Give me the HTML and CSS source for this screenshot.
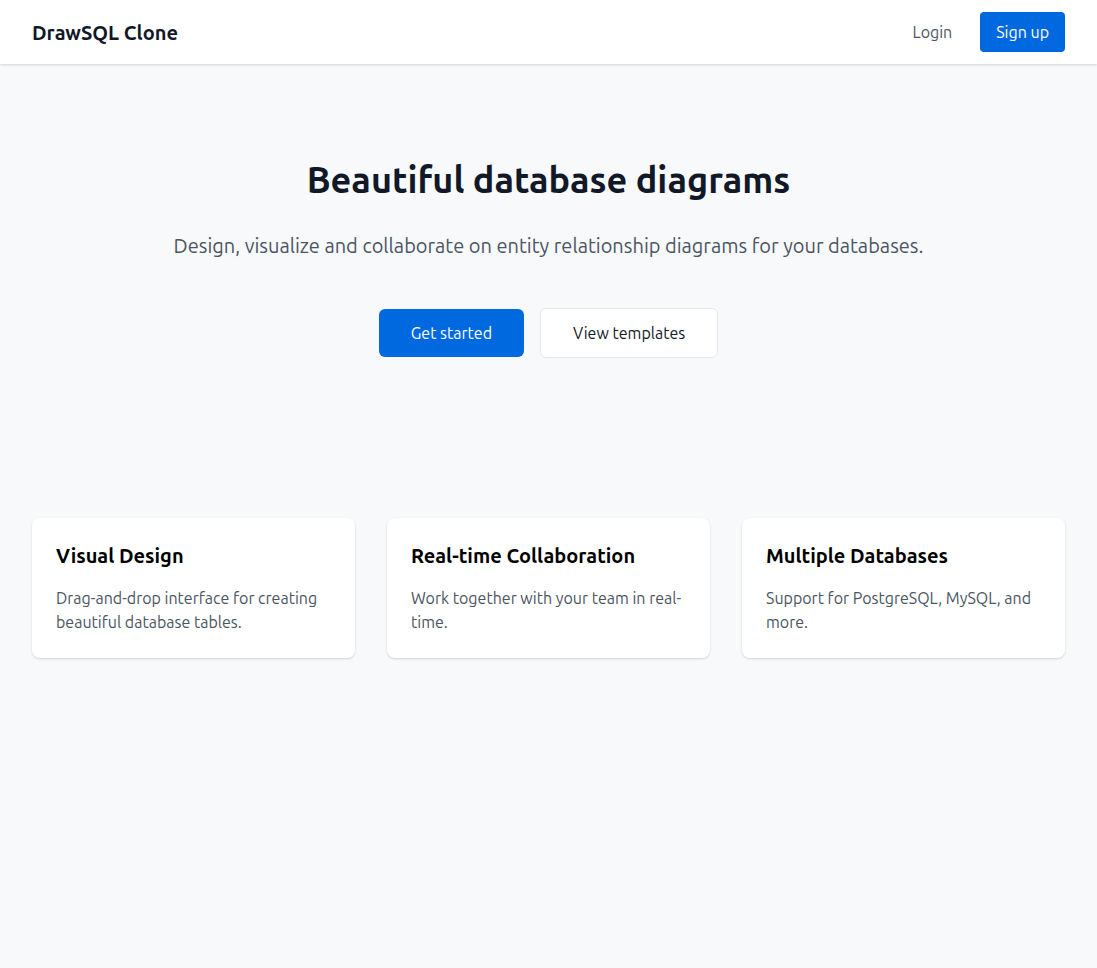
FILE: index.html
```html
<!DOCTYPE html>
<html lang="en">
<head>
<meta charset="utf-8">
<title>DrawSQL Clone</title>
<link rel="stylesheet" href="styles.css">
</head>
<body>
<header class="topbar">
  <div class="brand">DrawSQL Clone</div>
  <nav class="nav">
    <a class="nav-link" href="#">Login</a>
    <a class="btn-signup" href="#">Sign up</a>
  </nav>
</header>
<main class="main">
  <section class="hero">
    <h1 class="hero-title">Beautiful database diagrams</h1>
    <p class="hero-sub">Design, visualize and collaborate on entity relationship diagrams for your databases.</p>
    <div class="hero-actions">
      <a class="btn btn-primary" href="#">Get started</a>
      <a class="btn btn-outline" href="#">View templates</a>
    </div>
  </section>
  <section class="features">
    <div class="card">
      <h3 class="card-title">Visual Design</h3>
      <p class="card-text">Drag-and-drop interface for creating beautiful database tables.</p>
    </div>
    <div class="card">
      <h3 class="card-title">Real-time Collaboration</h3>
      <p class="card-text">Work together with your team in real-time.</p>
    </div>
    <div class="card">
      <h3 class="card-title">Multiple Databases</h3>
      <p class="card-text">Support for PostgreSQL, MySQL, and more.</p>
    </div>
  </section>
</main>
</body>
</html>
```

FILE: styles.css
```css
* { box-sizing: border-box; }
html, body { margin: 0; padding: 0; }
body {
  font-family: "Ubuntu", "Noto Sans", "Liberation Sans", sans-serif;
  background: #f8f9fb;
  color: #111827;
  min-height: 968px;
}
a { text-decoration: none; }
.topbar {
  height: 64px;
  background: #fff;
  display: flex;
  align-items: center;
  justify-content: space-between;
  padding: 0 32px;
  box-shadow: 0 1px 3px rgba(0,0,0,0.1), 0 1px 2px rgba(0,0,0,0.06);
}
.brand {
  font-size: 20px;
  font-weight: 700;
  color: #111827;
}
.nav { display: flex; align-items: center; gap: 12px; }
.nav-link {
  color: #4b5563;
  font-size: 16px;
  padding: 8px 16px;
  line-height: 24px;
}
.btn-signup {
  background: #0069e0;
  color: #fff;
  font-size: 16px;
  line-height: 24px;
  padding: 8px 16px;
  border-radius: 4px;
}
.hero {
  text-align: center;
  padding: 96px 32px 0;
}
.hero-title {
  margin: 0 0 32px;
  font-size: 36px;
  line-height: 40px;
  font-weight: 700;
  color: #111827;
}
.hero-sub {
  margin: 0 0 48px;
  font-size: 20px;
  line-height: 28px;
  color: #4b5563;
}
.hero-actions {
  display: flex;
  justify-content: center;
  align-items: center;
  gap: 16px;
}
.btn {
  display: inline-block;
  font-size: 16px;
  line-height: 24px;
  padding: 12px 32px;
  border-radius: 6px;
}
.btn-primary { background: #0069e0; color: #fff; }
.btn-outline { background: #fff; color: #111827; border: 1px solid #e5e7eb; }
.features {
  display: grid;
  grid-template-columns: repeat(3, 1fr);
  gap: 32px;
  padding: 0 32px;
  margin-top: 160px;
}
.card {
  background: #fff;
  border-radius: 8px;
  padding: 24px;
  height: 140px;
  box-shadow: 0 1px 3px rgba(0,0,0,0.1), 0 1px 2px rgba(0,0,0,0.06);
}
.card-title {
  margin: 0 0 16px;
  font-size: 20px;
  line-height: 28px;
  font-weight: 700;
  color: #000;
}
.card-text {
  margin: 0;
  font-size: 16px;
  line-height: 24px;
  color: #4b5563;
}
```
